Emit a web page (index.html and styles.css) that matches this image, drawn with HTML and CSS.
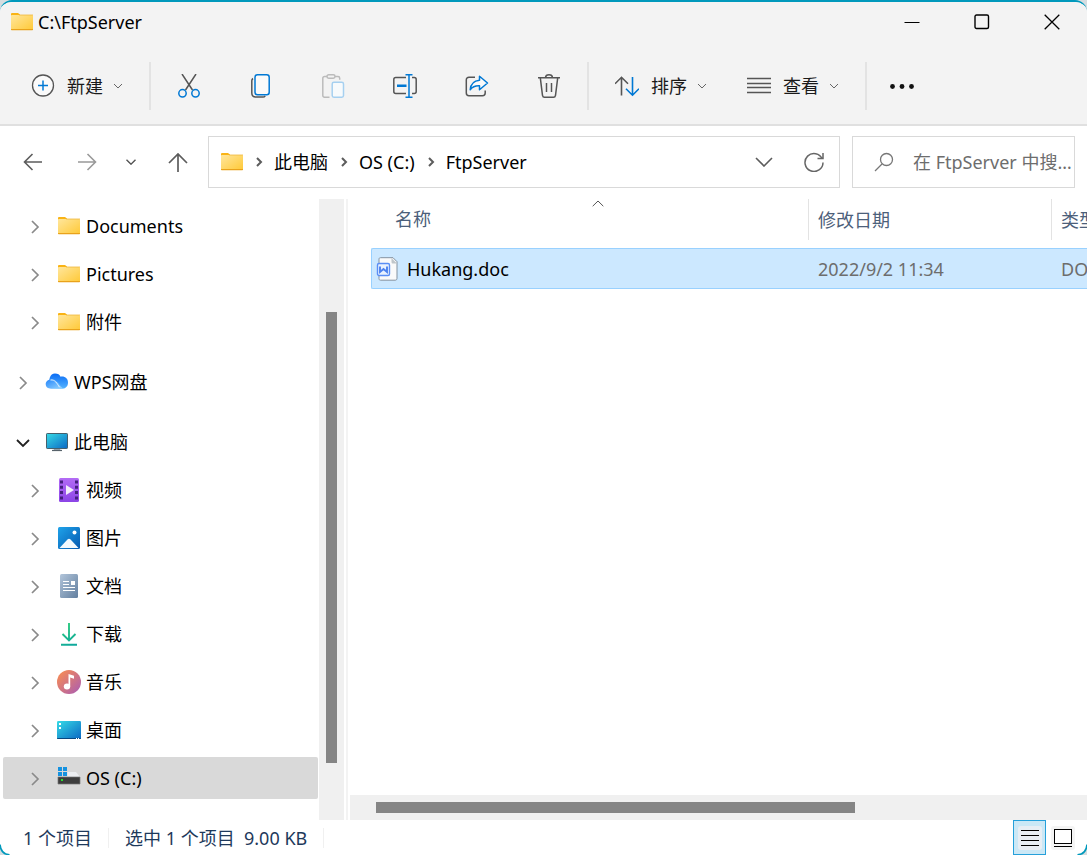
FILE: index.html
```html
<!DOCTYPE html>
<html lang="zh-CN">
<head>
<meta charset="utf-8">
<meta name="viewport" content="width=device-width, initial-scale=1">
<title>C:\FtpServer</title>
<link rel="stylesheet" href="styles.css">
</head>
<body>
<svg class="defs" width="0" height="0" aria-hidden="true">
  <defs>
    <linearGradient id="g-folder" x1="0" y1="0" x2="1" y2="1"><stop offset="0" stop-color="#ffe69c"/><stop offset="1" stop-color="#ffc937"/></linearGradient>
    <linearGradient id="g-screen" x1="0" y1="0" x2="1" y2="1"><stop offset="0" stop-color="#36dbe6"/><stop offset="1" stop-color="#0b68c4"/></linearGradient>
    <linearGradient id="g-cloud" x1="0" y1="0" x2="0" y2="1"><stop offset="0" stop-color="#0a6cf5"/><stop offset="1" stop-color="#55b4ff"/></linearGradient>
    <linearGradient id="g-cloud2" x1="0" y1="0" x2="1" y2="1"><stop offset="0" stop-color="#2184fb"/><stop offset="1" stop-color="#9ad8ff"/></linearGradient>
    <linearGradient id="g-video" x1="0" y1="0" x2="0" y2="1"><stop offset="0" stop-color="#b36cf5"/><stop offset="1" stop-color="#8b44e6"/></linearGradient>
    <linearGradient id="g-photo" x1="0" y1="0" x2="1" y2="1"><stop offset="0" stop-color="#1fa3ea"/><stop offset="1" stop-color="#0559b0"/></linearGradient>
    <linearGradient id="g-doc" x1="0" y1="0" x2="1" y2="1"><stop offset="0" stop-color="#b2c5da"/><stop offset="1" stop-color="#627f9f"/></linearGradient>
    <linearGradient id="g-down" gradientUnits="userSpaceOnUse" x1="6" y1="1" x2="16" y2="23"><stop offset="0" stop-color="#2fcf7c"/><stop offset="1" stop-color="#0fa89c"/></linearGradient>
    <linearGradient id="g-music" x1="0" y1="0" x2="1" y2="1"><stop offset=".1" stop-color="#f58b57"/><stop offset="1" stop-color="#a85bb5"/></linearGradient>
    <symbol id="folder" viewBox="0 0 24 24"><path d="M1 4a1 1 0 0 1 1-1h6l2 1.500V7H1z" fill="#f9b315"/><rect x="1" y="5" width="22" height="15" rx=".8" fill="url(#g-folder)"/><path d="M1 19h22v.5a.7.7 0 0 1-.7.7H1.700a.7.7 0 0 1-.7-.7z" fill="#e9a21b"/><path d="M9 5h14" stroke="#efb73d" stroke-width=".8"/></symbol>
    <symbol id="right" viewBox="0 0 12 14"><path d="M3 1l6 6-6 6" fill="none" stroke="#8a8a8a" stroke-width="1.700"/></symbol>
    <symbol id="crumb" viewBox="0 0 8 10"><path d="M2 1l4 4-4 4" fill="none" stroke="#5c5c5c" stroke-width="2"/></symbol>
    <symbol id="down" viewBox="0 0 10 6"><path d="M1 1l4 4 4-4" fill="none" stroke="#666" stroke-width="1"/></symbol>
  </defs>
</svg>

<div class="window">
  <header class="titlebar">
    <svg class="icon"><use href="#folder"/></svg>
    <h1 class="title">C:\FtpServer</h1>
    <div class="captions">
      <button type="button" class="caption" aria-label="最小化"><svg width="16" height="16" viewBox="0 0 16 16"><path d="M.5 8.500h15" stroke="#000" fill="none"/></svg></button>
      <button type="button" class="caption" aria-label="最大化"><svg width="16" height="16" viewBox="0 0 16 16"><rect x="1" y="1" width="13.500" height="13.500" rx="1.500" stroke="#000" stroke-width="1.400" fill="none"/></svg></button>
      <button type="button" class="caption" aria-label="关闭"><svg width="16" height="16" viewBox="0 0 16 16"><path d="M.7.7l14.600 14.600M15.300.7L.7 15.300" stroke="#000" stroke-width="1.300" fill="none"/></svg></button>
    </div>
  </header>

  <div class="toolbar" role="toolbar" aria-label="命令">
    <button type="button" class="command"><svg class="icon" viewBox="0 0 24 24" fill="none"><circle cx="12" cy="11.500" r="10.500" fill="#fafafa" stroke="#555" stroke-width="1.300"/><path d="M12 6.500v10M7 11.500h10" stroke="#0078d4" stroke-width="1.500"/></svg><span>新建</span><svg class="caret"><use href="#down"/></svg></button>
    <span class="rule"></span>
    <div class="tools">
      <button type="button" class="tool" aria-label="剪切"><svg class="icon" viewBox="0 0 24 24" fill="none" stroke-width="1.500"><path d="M5 0l10.500 16M19 0L8.500 16" stroke="#555"/><circle cx="5.500" cy="19.300" r="3.700" stroke="#0078d4"/><circle cx="18.500" cy="19.300" r="3.700" stroke="#0078d4"/></svg></button>
      <button type="button" class="tool" aria-label="复制"><svg class="icon" viewBox="0 0 24 24" fill="none" stroke-width="1.500"><path d="M4 4.500c-.8.500-1.200 1.200-1.200 2.200V19c0 2.500 1.600 4 4 4H14c1 0 1.700-.4 2.200-1.200" stroke="#555"/><rect x="6" y=".8" width="14.200" height="20" rx="2.500" fill="#fafafa" stroke="#0078d4"/></svg></button>
      <button type="button" class="tool" aria-label="粘贴" disabled><svg class="icon" viewBox="0 0 24 24" fill="none" stroke-width="1.500"><path d="M8.500 23.200h-5A1.700 1.700 0 0 1 1.800 21.500V4.200c0-1 .7-1.700 1.700-1.700H6M14 2.500h3c1 0 1.700.7 1.700 1.700v1.500" stroke="#bbb"/><rect x="6" y=".8" width="8" height="3.400" rx="1.700" stroke="#bbb"/><rect x="11.200" y="8.200" width="11.300" height="15" rx="1.700" fill="#f7fafc" stroke="#a6d0f0"/></svg></button>
      <button type="button" class="tool" aria-label="重命名"><svg class="icon" viewBox="0 0 24 24" fill="none" stroke-width="1.500"><path d="M13 3.500H2.800C1.500 3.500.8 4.200.8 5.500v12c0 1.300.7 2 2 2H13M19 3.500h2.200c1.300 0 2 .7 2 2v12c0 1.300-.7 2-2 2H19" stroke="#555"/><path d="M4 11.700h9.500" stroke="#0078d4" stroke-width="2.600"/><path d="M12.500.8h7M12.500 23.200h7M16 .8v22.400" stroke="#0078d4"/></svg></button>
      <button type="button" class="tool" aria-label="共享"><svg class="icon" viewBox="0 0 24 24" fill="none" stroke-width="1.500" stroke-linejoin="round"><path d="M10 3.300H4C2.300 3.300 1.300 4.300 1.300 6v13c0 1.700 1 2.700 2.700 2.700h13.500c1.700 0 2.700-1 2.700-2.700v-2.500" stroke="#555"/><path d="M14.500 2.200L22.500 9l-8 6.700v-4c-4.200-.2-7 .8-9.300 4C5.700 10.500 8.800 6.700 14.500 6.200z" fill="#fafafa" stroke="#0078d4"/></svg></button>
      <button type="button" class="tool" aria-label="删除"><svg class="icon" viewBox="0 0 24 24" fill="none" stroke="#555" stroke-width="1.500"><path d="M1 3.800h22M3.300 3.800l2.200 17.500c.2 1.200.9 1.900 2 1.900h9c1.100 0 1.800-.7 2-1.900L20.700 3.800"/><path d="M8.500 3.500c.3-3.600 6.700-3.600 7 0M9.500 9v9M14.500 9v9"/></svg></button>
    </div>
    <span class="rule"></span>
    <div class="menus">
      <button type="button" class="command"><svg class="icon" viewBox="0 0 24 24" fill="none" stroke-width="1.600"><path d="M6.500 21.500V3.500M0 9.800l6.500-6.500L13 9.800" stroke="#555"/><path d="M17.500 3v18M11 14.700l6.500 6.500 6.500-6.500" stroke="#0078d4"/></svg><span>排序</span><svg class="caret"><use href="#down"/></svg></button>
      <button type="button" class="command"><svg class="icon" viewBox="0 0 24 24"><path d="M0 4.500h24M0 9.500h24M0 13.500h24M0 18.500h24" stroke="#555" stroke-width="1.300"/></svg><span>查看</span><svg class="caret"><use href="#down"/></svg></button>
    </div>
    <span class="rule"></span>
    <button type="button" class="more" aria-label="更多"><svg class="icon" viewBox="0 0 24 24" fill="#111"><circle cx="2.500" cy="12.500" r="2.400"/><circle cx="12" cy="12.500" r="2.400"/><circle cx="21.500" cy="12.500" r="2.400"/></svg></button>
  </div>

  <div class="navbar">
    <button type="button" class="nav" aria-label="后退"><svg width="20" height="18" viewBox="0 0 20 18" fill="none" stroke="#5c5c5c" stroke-width="1.600"><path d="M19 9H1.500M9.500 1l-8 8 8 8"/></svg></button>
    <button type="button" class="nav" aria-label="前进"><svg width="20" height="18" viewBox="0 0 20 18" fill="none" stroke="#999" stroke-width="1.600"><path d="M1 9h17.500M10.500 1l8 8-8 8"/></svg></button>
    <button type="button" class="nav nav-recent" aria-label="最近的位置"><svg width="10" height="6" viewBox="0 0 10 6"><path d="M.5.7L5 5.200 9.500.7" fill="none" stroke="#555" stroke-width="1.400"/></svg></button>
    <button type="button" class="nav nav-up" aria-label="上移"><svg width="20" height="20" viewBox="0 0 20 20" fill="none" stroke="#5c5c5c" stroke-width="1.700"><path d="M10 20V2M1 11l9-9 9 9"/></svg></button>
    <nav class="address" aria-label="地址">
      <svg class="icon"><use href="#folder"/></svg>
      <svg class="crumb-arrow"><use href="#crumb"/></svg>
      <a href="#pc">此电脑</a>
      <svg class="crumb-arrow"><use href="#crumb"/></svg>
      <a href="#c">OS (C:)</a>
      <svg class="crumb-arrow"><use href="#crumb"/></svg>
      <a href="#ftp">FtpServer</a>
      <div class="address-actions">
        <button type="button" class="address-button" aria-label="历史记录"><svg width="18" height="10" viewBox="0 0 18 10"><path d="M1 1l8 8 8-8" fill="none" stroke="#5c5c5c" stroke-width="1.600"/></svg></button>
        <button type="button" class="address-button" aria-label="刷新"><svg width="20" height="20" viewBox="0 0 20 20" fill="none" stroke="#666" stroke-width="1.500"><path d="M18.300 7A9 9 0 1 0 19 10.500M19 1v5.500h-5.500"/></svg></button>
      </div>
    </nav>
    <label class="search">
      <svg width="20" height="20" viewBox="0 0 20 20" fill="none" stroke="#777" stroke-width="1.300"><circle cx="12.500" cy="7.500" r="6"/><path d="M8 12L1 19"/></svg>
      <input type="text" aria-label="搜索" placeholder="在 FtpServer 中搜索">
    </label>
  </div>

  <main class="main">
    <aside class="sidebar">
      <ul class="tree">
        <li class="node child"><button type="button" class="toggle" aria-label="展开"><svg><use href="#right"/></svg></button><a href="#documents"><svg class="icon"><use href="#folder"/></svg>Documents</a></li>
        <li class="node child"><button type="button" class="toggle" aria-label="展开"><svg><use href="#right"/></svg></button><a href="#pictures"><svg class="icon"><use href="#folder"/></svg>Pictures</a></li>
        <li class="node child"><button type="button" class="toggle" aria-label="展开"><svg><use href="#right"/></svg></button><a href="#attach"><svg class="icon"><use href="#folder"/></svg>附件</a></li>
        <li class="node root"><button type="button" class="toggle" aria-label="展开"><svg><use href="#right"/></svg></button><a href="#wps"><svg class="icon" viewBox="0 0 24 24"><path d="M5 18C3 9 5 3.500 10 3.500c3 0 4.500 1.200 5.500 3.200C20 6 23 8.500 23 12.500c0 3.500-2 6-5.500 6.300z" fill="url(#g-cloud)"/><path d="M3 10.200c4-2 7.500-1 10 2.300 2 2.800 3 4.500 5.500 6.200H6C2.500 18.700.7 17 .7 14.300c0-1.800.8-3.300 2.300-4.100z" fill="url(#g-cloud2)"/><path d="M5.500 10c4.500-.8 6.500 3.500 9 7.200" stroke="#e5f4ff" stroke-width="1" fill="none"/></svg>WPS网盘</a></li>
        <li class="node root"><button type="button" class="toggle" aria-label="折叠"><svg viewBox="0 0 14 14"><path d="M1 4l6 6 6-6" fill="none" stroke="#222" stroke-width="1.800"/></svg></button><a href="#pc"><svg class="icon" viewBox="0 0 24 24"><path d="M9 18h6l.5 3h-7z" fill="#9aa5ad"/><path d="M7 20.500h10" stroke="#58636b" stroke-width="1.200"/><rect x="1.500" y="3.500" width="21" height="15" rx=".7" fill="url(#g-screen)" stroke="#45606d"/></svg>此电脑</a></li>
        <li class="node child"><button type="button" class="toggle" aria-label="展开"><svg><use href="#right"/></svg></button><a href="#videos"><svg class="icon" viewBox="0 0 24 24"><rect x="2" width="20" height="24" rx="1.500" fill="url(#g-video)"/><path d="M4.500 2.500v20M19.500 2.500v20" stroke="#45207e" stroke-width="3" stroke-dasharray="3 2.300"/><path d="M9 7l8 5-8 5z" fill="#f3eefa"/></svg>视频</a></li>
        <li class="node child"><button type="button" class="toggle" aria-label="展开"><svg><use href="#right"/></svg></button><a href="#photos"><svg class="icon" viewBox="0 0 24 24"><rect x="1" y="1" width="22" height="22" rx="1.500" fill="url(#g-photo)"/><circle cx="17.500" cy="6.500" r="2" fill="#fff"/><path d="M2.500 22l8-8.500c1-1 2-1 3 0l8 8.500z" fill="#f3f9fe"/></svg>图片</a></li>
        <li class="node child"><button type="button" class="toggle" aria-label="展开"><svg><use href="#right"/></svg></button><a href="#docs"><svg class="icon" viewBox="0 0 24 24"><rect x="3" width="18" height="24" rx="1.500" fill="url(#g-doc)"/><path d="M6 7.500h6M6 10.500h6M6 13.500h12M6 16.500h12" stroke="#fff" stroke-width="1"/><rect x="14" y="7" width="4" height="4" fill="#fff"/></svg>文档</a></li>
        <li class="node child"><button type="button" class="toggle" aria-label="展开"><svg><use href="#right"/></svg></button><a href="#downloads"><svg class="icon" viewBox="0 0 24 24"><path d="M12 1v17M5.500 12l6.500 6.500 6.500-6.500M4 22.700h16" fill="none" stroke="url(#g-down)" stroke-width="1.900"/></svg>下载</a></li>
        <li class="node child"><button type="button" class="toggle" aria-label="展开"><svg><use href="#right"/></svg></button><a href="#music"><svg class="icon" viewBox="0 0 24 24"><circle cx="12" cy="12" r="12" fill="url(#g-music)"/><ellipse cx="10" cy="16.500" rx="3.200" ry="3" fill="#fff"/><path d="M11.500 16.500V4l5.500 1.700v3L13.200 7.500v9z" fill="#fff"/></svg>音乐</a></li>
        <li class="node child"><button type="button" class="toggle" aria-label="展开"><svg><use href="#right"/></svg></button><a href="#desktop"><svg class="icon" viewBox="0 0 24 24"><rect y="3" width="24" height="18" rx="1.200" fill="url(#g-screen)"/><path d="M0 20h24v.3c0 .5-.4.7-.8.7H.8c-.4 0-.8-.2-.8-.7z" fill="#08477f"/><path d="M2 5h2v2h-2zM2 9h2v2h-2zM19 20h1v1h-1zM21 20h1v1h-1z" fill="#fff"/></svg>桌面</a></li>
        <li class="node child selected"><button type="button" class="toggle" aria-label="展开"><svg><use href="#right"/></svg></button><a href="#c" aria-current="true"><svg class="icon" viewBox="0 0 24 24"><path d="M1 12l2.500-6H19l4 5z" fill="#eceef1"/><path d="M1 0h9.500v10.500H1z" fill="#d9d9d9"/><path d="M1 1h4v4H1zM6 1h4v4H6zM1 6h4v4H1zM6 6h4v4H6z" fill="#1592e0"/><rect x="1" y="11" width="22" height="7" fill="#3d3d3d"/><path d="M1 11h22v7H1z" fill="none" stroke="#777" stroke-width=".7"/><rect x="4" y="13" width="2" height="2" fill="#27e02f"/></svg>OS (C:)</a></li>
      </ul>
      <div class="vscroll"><span class="thumb"></span></div>
    </aside>

    <section class="pane">
      <div class="listing">
        <table class="files">
          <colgroup><col class="col-name"><col class="col-date"><col class="col-type"></colgroup>
          <thead>
            <tr>
              <th scope="col" aria-sort="ascending"><button type="button" class="heading heading-name"><svg class="sort" viewBox="0 0 12 7"><path d="M.7 6.200L6 1l5.300 5.200" fill="none" stroke="#555" stroke-width="1"/></svg><span>名称</span></button></th>
              <th scope="col"><button type="button" class="heading">修改日期</button></th>
              <th scope="col"><button type="button" class="heading">类型</button></th>
            </tr>
          </thead>
          <tbody>
            <tr>
              <td class="cell-name"><a href="#hukang"><svg class="icon" viewBox="0 0 24 24"><path d="M4.500.7H17l4 4v16.600c0 1.200-.6 1.900-1.800 1.900H4.500c-1 0-1.500-.6-1.500-1.500V2.200C3 1.200 3.500.7 4.500.7z" fill="#fafafa" stroke="#8492a0"/><path d="M15.500 1l5.500 5.500h-4c-1 0-1.500-.5-1.500-1.500z" fill="#c0c6ca"/><rect x="1.500" y="6.500" width="12" height="12" rx="1.500" fill="#e9f2ff" stroke="#5b8ff5" stroke-width="1.400"/><path d="M4 9.500V15l3.500-3 3.500 3V9.500" fill="none" stroke="#4d82ef" stroke-width="1.900"/></svg>Hukang.doc</a></td>
              <td>2022/9/2 11:34</td>
              <td>DOC 文档</td>
            </tr>
          </tbody>
        </table>
      </div>
      <div class="hscroll"><span class="thumb"></span></div>
    </section>
  </main>

  <footer class="status">
    <span class="status-item">1 个项目</span>
    <span class="status-item">选中 1 个项目&nbsp; 9.00 KB</span>
    <div class="views">
      <button type="button" class="view active" aria-label="详细信息" aria-pressed="true"><svg class="icon" viewBox="0 0 24 24"><rect width="24" height="24" rx="3" fill="#e8eef4"/><path d="M3 4.500h18M3 9.500h18M3 14.500h18M3 19.500h18" stroke="#000"/></svg></button>
      <button type="button" class="view" aria-label="大图标" aria-pressed="false"><svg class="icon" viewBox="0 0 24 24"><rect width="24" height="24" rx="3" fill="#f4f4f4"/><rect x="3.500" y="3.500" width="17" height="14" fill="#fff" stroke="#000"/><path d="M3 20.500h18" stroke="#000"/></svg></button>
    </div>
  </footer>
  <svg class="corner corner-left" viewBox="0 0 12 12"><path d="M0 2c0 5.500 4.500 10 10 10H0z" fill="#d5dde0"/><path d="M0 1.500c.5 6 4 9.800 9.500 10.300" fill="none" stroke="#0099bc" stroke-width="1.600"/></svg>
  <svg class="corner corner-right" viewBox="0 0 12 12"><path d="M12 2c0 5.500-4.500 10-10 10h10z" fill="#d5dde0"/><path d="M12 1.500c-.5 6-4 9.800-9.500 10.300" fill="none" stroke="#0099bc" stroke-width="1.600"/></svg>
</div>
</body>
</html>
```
FILE: styles.css
```css
* { box-sizing: border-box; }

body {
  margin: 0;
  background: #d5dde0;
  color: #000;
  font: 18px/24px "Noto Sans", "Noto Sans CJK SC", sans-serif;
}

button, input {
  margin: 0;
  padding: 0;
  border: 0;
  background: none;
  color: inherit;
  font: inherit;
}

a { color: inherit; text-decoration: none; }
svg { display: block; flex: none; }
.defs { position: absolute; }
.icon { width: 24px; height: 24px; }

.window {
  position: relative;
  display: flex;
  flex-direction: column;
  min-height: 100vh;
  overflow: hidden;
  border-top: 2px solid #0099bc;
  border-radius: 12px 12px 0 0;
  background: #fff;
}

/* Title bar */
.titlebar {
  display: flex;
  align-items: center;
  height: 44px;
  padding-left: 10px;
  padding-bottom: 4px;
  background: #f3f3f3;
}
.title { margin: 0 0 0 4px; font-size: 18px; font-weight: 400; }
.captions { display: flex; margin-left: auto; }
.caption { display: grid; place-items: center; width: 70px; height: 40px; }

/* Command bar */
.toolbar {
  display: flex;
  align-items: center;
  height: 80px;
  padding: 2px 0 0 19px;
  border-bottom: 2px solid #e0e0e0;
  background: #f3f3f3;
}
.command { display: flex; align-items: center; height: 48px; padding: 0 12px; color: #1a1a1a; white-space: nowrap; }
.command span { margin: 0 10px 0 12px; }
.caret { width: 10px; height: 6px; }
.rule { width: 2px; height: 48px; margin: 0 14px; background: #e3e3e3; }
.tools { display: flex; gap: 24px; }
.tool { display: grid; place-items: center; width: 48px; height: 48px; }
.menus { display: flex; gap: 16px; }
.more { display: grid; place-items: center; width: 42px; height: 48px; }

/* Navigation row */
.navbar { display: flex; align-items: center; height: 73px; padding: 0 12px 1px 6px; }
.nav { display: grid; flex: none; place-items: center; width: 54px; height: 52px; }
.nav-recent { width: 34px; }
.nav-up { width: 60px; }
.address {
  display: flex;
  flex: 1;
  align-items: center;
  gap: 11px;
  height: 52px;
  padding-left: 11px;
  border: 1px solid #d9d9d9;
  white-space: nowrap;
}
.address a { padding-right: 1px; }
.crumb-arrow { width: 8px; height: 10px; }
.address-actions { display: flex; margin-left: auto; }
.address-button { display: grid; place-items: center; width: 50px; height: 50px; }
.search {
  display: flex;
  align-items: center;
  gap: 19px;
  flex: 0 0 223px;
  height: 52px;
  margin-left: 12px;
  padding-left: 21px;
  border: 1px solid #d9d9d9;
}
.search input { flex: 1; width: 100%; min-width: 0; outline: 0; text-overflow: ellipsis; }
.search input::placeholder { color: #6d6d6d; opacity: 1; }

/* Body */
.main { display: flex; flex: 1; }
.sidebar { display: flex; flex: 0 0 348px; border-right: 2px solid #f3f3f3; }
.tree {
  display: flex;
  flex: 1;
  flex-direction: column;
  gap: 6px;
  margin: 0;
  padding: 6px 1px 20px 3px;
  list-style: none;
}
.node { display: flex; align-items: center; height: 42px; border-radius: 2px; }
.node.child { padding-left: 25px; }
.node.root { margin-top: 12px; padding-left: 13px; }
.node a { display: flex; flex: 1; align-items: center; gap: 5px; }
.node.selected { background: #d9d9d9; }
.toggle { height: 16px; margin-right: 15px; padding-top: 2px; }
.toggle svg { width: 14px; height: 14px; }
.vscroll {
  display: grid;
  grid-template-rows: 113fr 451fr 57fr;
  width: 25px;
  margin-right: 2px;
  padding: 0 7px;
  background: #f0f0f0;
}
.vscroll .thumb { grid-row: 2; background: #858585; }

.pane { display: flex; flex: 1; flex-direction: column; min-width: 0; padding-left: 2px; }
.listing { flex: 1; overflow: hidden; padding-left: 21px; }
.hscroll {
  display: grid;
  grid-template-columns: 26fr 479fr 232fr;
  height: 25px;
  padding: 7px 0;
  background: #f0f0f0;
}
.hscroll .thumb { grid-column: 2; background: #858585; }

.files { width: 920px; table-layout: fixed; border-collapse: separate; border-spacing: 0; }
.col-name { width: 437px; }
.col-date { width: 243px; }
.files th { padding: 0 0 8px; font-weight: 400; text-align: left; }
.heading {
  display: block;
  width: 100%;
  height: 41px;
  padding-left: 9px;
  border-left: 1px solid #e3e3e3;
  color: #4c607a;
  text-align: left;
}
.heading-name { display: flex; flex-direction: column; padding-left: 24px; border-left: 0; }
.sort { align-self: center; width: 12px; height: 7px; margin: 1px 8px 0 0; }
.files td { height: 41px; padding: 0 0 0 10px; border: solid #99d1ff; border-width: 1px 0; background: #cce8ff; color: #6d6d6d; }
.files .cell-name { padding-left: 4px; border-left-width: 1px; border-radius: 2px 0 0 2px; color: #000; }
.cell-name a { display: flex; align-items: center; gap: 7px; }

/* Status bar */
.status { display: flex; align-items: center; height: 35px; padding-left: 23px; color: #1e395b; }
.status-item { margin-right: 16px; padding-right: 16px; border-right: 1px solid #f0f0f0; line-height: 20px; white-space: nowrap; }
.views { display: flex; margin-left: auto; padding-right: 8px; }
.view { display: grid; place-items: center; width: 33px; height: 35px; border: 1px solid transparent; }
.view.active { border-color: #26a0da; background: #cbe8f6; }

.corner { position: absolute; bottom: 0; width: 12px; height: 12px; }
.corner-left { left: 0; }
.corner-right { right: 0; }
```
